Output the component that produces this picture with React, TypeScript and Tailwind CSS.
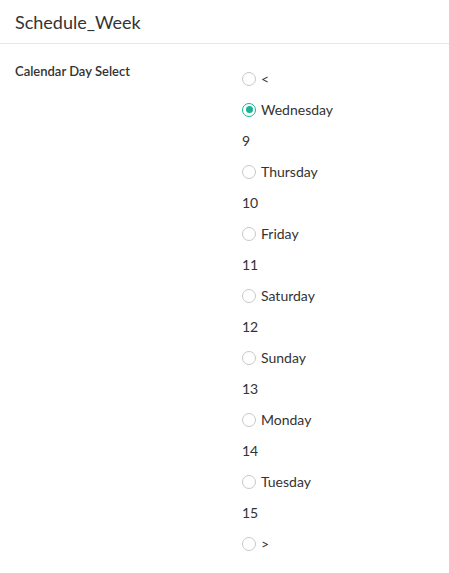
import { useState } from "react";

const days = [
  { label: "Wednesday", num: "9" },
  { label: "Thursday", num: "10" },
  { label: "Friday", num: "11" },
  { label: "Saturday", num: "12" },
  { label: "Sunday", num: "13" },
  { label: "Monday", num: "14" },
  { label: "Tuesday", num: "15" },
];

function Radio({ checked, label, onClick }: { checked: boolean; label: string; onClick: () => void }) {
  return (
    <button type="button" onClick={onClick} className="flex h-[31px] items-center gap-[5px] text-left">
      <span
        className={`flex h-[14px] w-[14px] items-center justify-center rounded-full border bg-white ${
          checked ? "border-[#1ab394]" : "border-[#c8c8c8]"
        }`}
      >
        {checked ? <span className="h-[7px] w-[7px] rounded-full bg-[#1ab394]" /> : null}
      </span>
      <span>{label}</span>
    </button>
  );
}

export default function App() {
  const [selected, setSelected] = useState("Wednesday");

  return (
    <div className="min-h-[573px] bg-white text-[#333333]" style={{ fontFamily: "Lato, 'Open Sans', sans-serif" }}>
      <div className="flex h-[44px] items-center border-b border-[#e7e7e7] px-[15px]">
        <h1 className="text-[18px] leading-none text-[#333333]">Schedule_Week</h1>
      </div>
      <div className="flex pt-[19px]">
        <div className="w-[242px] pl-[15px] text-[13px] font-semibold leading-[16px]">Calendar Day Select</div>
        <div className="flex flex-col text-[14px]">
          <Radio checked={selected === "<"} label="<" onClick={() => setSelected("<")} />
          {days.map((day) => (
            <div key={day.label} className="flex flex-col">
              <Radio checked={selected === day.label} label={day.label} onClick={() => setSelected(day.label)} />
              <div className="flex h-[31px] items-center">{day.num}</div>
            </div>
          ))}
          <Radio checked={selected === ">"} label=">" onClick={() => setSelected(">")} />
        </div>
      </div>
    </div>
  );
}
